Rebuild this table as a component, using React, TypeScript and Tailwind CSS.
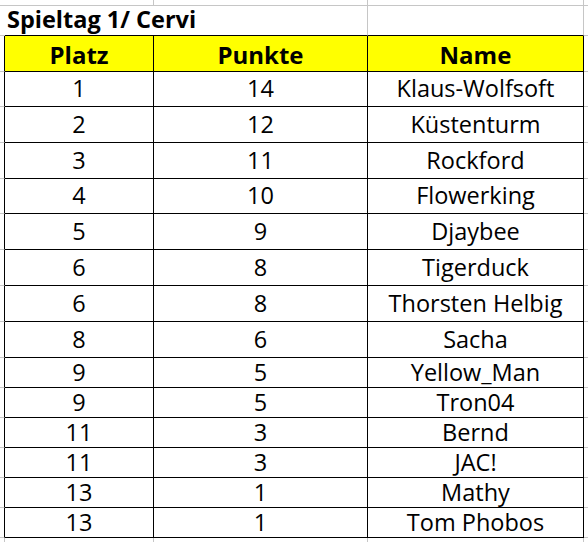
const rows: [string, string, string, string][] = [
  ["1", "14", "Klaus-Wolfsoft", "h-[35px]"],
  ["2", "12", "Küstenturm", "h-[36px]"],
  ["3", "11", "Rockford", "h-[36px]"],
  ["4", "10", "Flowerking", "h-[35px]"],
  ["5", "9", "Djaybee", "h-[36px]"],
  ["6", "8", "Tigerduck", "h-[36px]"],
  ["6", "8", "Thorsten Helbig", "h-[36px]"],
  ["8", "6", "Sacha", "h-[36px]"],
  ["9", "5", "Yellow_Man", "h-[30px]"],
  ["9", "5", "Tron04", "h-[30px]"],
  ["11", "3", "Bernd", "h-[30px]"],
  ["11", "3", "JAC!", "h-[30px]"],
  ["13", "1", "Mathy", "h-[30px]"],
  ["13", "1", "Tom Phobos", "h-[30px]"],
];

const grid = "grid grid-cols-[5px_149px_214px_216px_4px]";
const cell = "flex items-center justify-center border-r border-b border-black leading-none";

export default function App() {
  return (
    <div className="w-[588px] h-[542px] overflow-hidden bg-white text-black font-['Open_Sans',sans-serif]">
      {/* row above title */}
      <div className={`${grid} h-[6px]`}>
        <div className="border-b border-[#c6c6c6]" />
        <div className="border-r border-b border-[#c6c6c6]" />
        <div className="border-r border-b border-[#c6c6c6]" />
        <div className="border-r border-b border-[#c6c6c6]" />
        <div className="border-b border-[#c6c6c6]" />
      </div>

      {/* title */}
      <div className={`${grid} h-[30px]`}>
        <div className="border-b border-[#c6c6c6]" />
        <div className="col-span-2 flex items-center pl-[2px] pb-[2px] border-r border-r-[#c6c6c6] border-b border-b-black text-[23.5px] font-bold leading-none whitespace-nowrap">
          Spieltag 1/ Cervi
        </div>
        <div className="border-r border-r-[#c6c6c6] border-b border-b-black" />
        <div className="border-b border-[#c6c6c6]" />
      </div>

      {/* header */}
      <div className={`${grid} h-[36px]`}>
        <div className="border-r border-r-black border-b border-b-[#c6c6c6]" />
        <div className={`${cell} bg-[#ffff00] text-[24px] font-bold pt-[3px]`}>Platz</div>
        <div className={`${cell} bg-[#ffff00] text-[24px] font-bold pt-[3px]`}>Punkte</div>
        <div className={`${cell} bg-[#ffff00] text-[24px] font-bold pt-[3px]`}>Name</div>
        <div className="border-b border-[#c6c6c6]" />
      </div>

      {rows.map(([platz, punkte, name, h], i) => (
        <div key={i} className={`${grid} ${h}`}>
          <div className="border-r border-r-black border-b border-b-[#c6c6c6]" />
          <div className={`${cell} text-[23.5px]`}>{platz}</div>
          <div className={`${cell} text-[23.5px]`}>{punkte}</div>
          <div className={`${cell} text-[23.5px] whitespace-nowrap`}>{name}</div>
          <div className="border-b border-[#c6c6c6]" />
        </div>
      ))}

      {/* below table */}
      <div className={`${grid} h-[10px]`}>
        <div className="border-r border-[#c6c6c6]" />
        <div className="border-r border-[#c6c6c6]" />
        <div className="border-r border-[#c6c6c6]" />
        <div className="border-r border-[#c6c6c6]" />
        <div />
      </div>
    </div>
  );
}
